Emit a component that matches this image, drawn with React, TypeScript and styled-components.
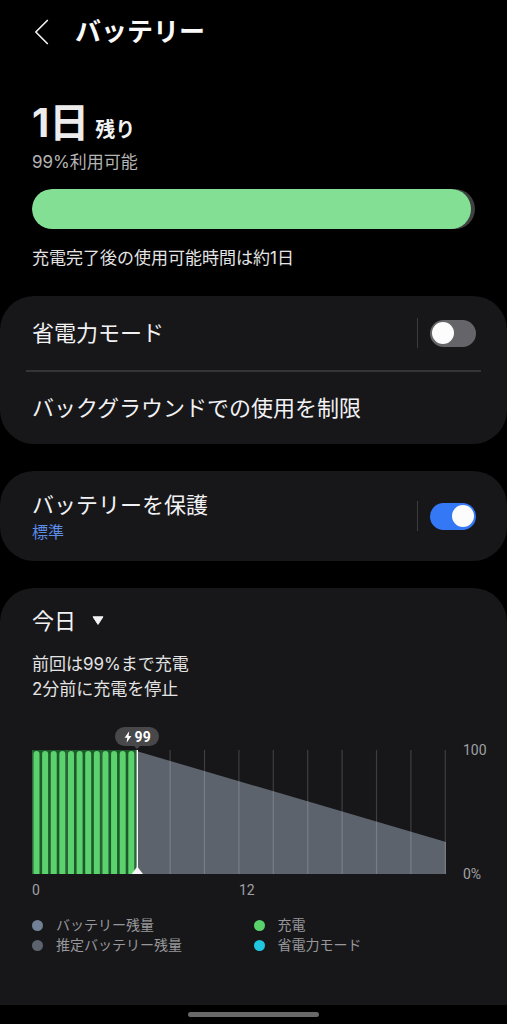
import React, { useState } from "react";
import styled, { createGlobalStyle } from "styled-components";

const GlobalStyle = createGlobalStyle`
  *, *::before, *::after { box-sizing: border-box; }
  html, body { margin: 0; background: #000; }
  body, button, select, input {
    font-family: Inter, "Noto Sans CJK JP", sans-serif;
    color: #f2f2f4;
  }
`;

const Page = styled.div`
  display: flex;
  flex-direction: column;
  min-height: 100vh;
  background: #000;
`;

const Header = styled.header`
  display: flex;
  align-items: center;
  gap: 26px;
  height: 63px;
  padding: 0 32px;
`;

const BackButton = styled.button`
  display: flex;
  padding: 0;
  border: 0;
  background: none;
  cursor: pointer;
`;

const PageTitle = styled.h1`
  margin: 0;
  font-size: 26px;
  line-height: 36px;
  font-weight: 700;
  color: #fafafa;
`;

const Summary = styled.section`
  padding: 35px 32px 26px;
`;

const Remaining = styled.p`
  display: flex;
  align-items: baseline;
  gap: 6px;
  margin: 0 0 2px;
  font-weight: 700;
`;

const RemainingValue = styled.span`
  font-size: 40px;
  line-height: 50px;
  color: #ececec;
`;

const RemainingUnit = styled.span`
  font-size: 20px;
  line-height: 24px;
`;

const Note = styled.p<{ $muted?: boolean }>`
  margin: 0;
  font-size: 17px;
  line-height: 24px;
  color: ${(p) => (p.$muted ? "#b4b4b4" : "#e4e4e4")};
`;

const Meter = styled.div`
  height: 40px;
  margin: 15px 0 17px;
  border-radius: 20px;
  background: #3f4141;
  overflow: hidden;
`;

const MeterFill = styled.div`
  height: 100%;
  border-radius: 20px;
  background: #82df93;
`;

const Card = styled.section<{ $last?: boolean }>`
  border-radius: ${(p) => (p.$last ? "34px 34px 0 0" : "34px")};
  background: #17171a;
  flex: ${(p) => (p.$last ? "1 0 auto" : "0 0 auto")};
  padding: ${(p) => (p.$last ? "17px 32px 48px" : "0")};
  & + & { margin-top: 27px; }
`;

const Row = styled.div<{ $height: number }>`
  display: flex;
  align-items: center;
  justify-content: space-between;
  min-height: ${(p) => p.$height}px;
  padding: 0 31px 0 32px;
`;

const RowText = styled.div`
  display: flex;
  flex-direction: column;
  padding-top: 2px;
`;

const RowLabel = styled.label`
  font-size: 22px;
  line-height: 30px;
`;

const RowButton = styled.button`
  width: 100%;
  padding: 0;
  border: 0;
  background: none;
  font-size: 22px;
  line-height: 30px;
  text-align: left;
  cursor: pointer;
`;

const RowStatus = styled.span`
  font-size: 16px;
  line-height: 24px;
  color: #5c8ce6;
`;

const Divider = styled.hr`
  height: 2px;
  margin: 0 26px;
  border: 0;
  background: #353538;
`;

const SwitchArea = styled.div`
  display: flex;
  align-items: center;
  height: 30px;
  padding-left: 12px;
  border-left: 1px solid #3c3c40;
`;

const Switch = styled.input`
  appearance: none;
  display: flex;
  align-items: center;
  width: 46px;
  height: 27px;
  margin: 0;
  padding: 0 2px;
  border-radius: 14px;
  background: #656569;
  cursor: pointer;

  &::before {
    content: "";
    width: 22px;
    height: 22px;
    border-radius: 50%;
    background: #fcfcfc;
  }
  &:checked {
    justify-content: flex-end;
    background: #3578f6;
  }
`;

const DayPicker = styled.div`
  display: flex;
  align-items: center;
  gap: 16px;
  height: 32px;
  margin-bottom: 15px;
`;

const DaySelect = styled.select`
  appearance: none;
  field-sizing: content;
  margin: 0;
  padding: 0;
  border: 0;
  background: none;
  font-size: 22px;
  line-height: 32px;
  cursor: pointer;
`;

const HistoryText = styled.p`
  margin: 0;
  font-size: 17px;
  line-height: 25px;
  color: #e4e4e4;
`;

const Chart = styled.figure`
  display: flex;
  gap: 17px;
  margin: 48px -16px 0 0;
  font-family: Roboto, sans-serif;
  font-size: 14px;
  line-height: 20px;
  color: #a0a0a3;
`;

const PlotColumn = styled.div`
  flex: 1;
  position: relative;
`;

const Plot = styled.svg`
  display: block;
  width: 100%;
  height: auto;
`;

const Tag = styled.div`
  position: absolute;
  left: 25.4%;
  bottom: 100%;
  display: flex;
  align-items: center;
  justify-content: center;
  gap: 3px;
  width: 44px;
  height: 19px;
  margin-bottom: 4px;
  border-radius: 10px;
  background: #48484b;
  font-weight: 700;
  color: #fff;
  transform: translateX(-50%);

  &::after {
    content: "";
    position: absolute;
    top: 100%;
    left: 50%;
    border: 3px solid transparent;
    border-top-color: #48484b;
    transform: translateX(-50%);
  }
`;

const XAxis = styled.div`
  display: grid;
  grid-template-columns: 1fr 1fr;
  margin-top: 6px;
`;

const YAxis = styled.div`
  display: flex;
  flex-direction: column;
  justify-content: space-between;
  width: 28px;
  margin: -10px 0 16px;
`;

const Legend = styled.ul`
  display: grid;
  grid-template-columns: 1fr 1fr;
  margin: 15px 0 0;
  padding: 0;
  list-style: none;
`;

const LegendItem = styled.li<{ $color: string }>`
  display: flex;
  align-items: center;
  gap: 13px;
  font-size: 14px;
  line-height: 20px;
  color: #98989b;

  &::before {
    content: "";
    width: 11px;
    height: 11px;
    border-radius: 50%;
    background: ${(p) => p.$color};
  }
`;

const NavBar = styled.footer`
  display: flex;
  justify-content: center;
  align-items: center;
  height: 19px;
`;

const NavHandle = styled.div`
  width: 26%;
  height: 5px;
  border-radius: 3px;
  background: #69696a;
`;

const LEVEL = 99;
const CHARGE_BARS = Array.from({ length: 12 }, (_, i) => 1.5 + i * 8.62);
const GRID_LINES = Array.from({ length: 13 }, (_, i) => 0.5 + i * 34.4);

const LEGEND = [
  { label: "バッテリー残量", color: "#718096" },
  { label: "充電", color: "#59d26c" },
  { label: "推定バッテリー残量", color: "#5d636d" },
  { label: "省電力モード", color: "#1fc8e0" },
];

function ToggleControl({ id, initial }: { id: string; initial: boolean }) {
  const [on, setOn] = useState(initial);
  return (
    <SwitchArea>
      <Switch id={id} type="checkbox" role="switch" checked={on} onChange={() => setOn(!on)} />
    </SwitchArea>
  );
}

function BatteryPlot() {
  return (
    <Plot viewBox="0 0 414 124" aria-hidden="true">
      <rect x="0" y="0" width="105" height="124" fill="#1d5a2a" />
      {CHARGE_BARS.map((x) => (
        <path key={x} d={`M${x} 124V4a3 3 0 0 1 6 0V124z`} fill="#5bd26e" />
      ))}
      <path d="M106 1.5L414 92V124H106z" fill="#5d636d" />
      {GRID_LINES.map((x, i) => (
        <rect
          key={x}
          x={x - 0.6}
          y="0"
          width="1.2"
          height="124"
          fill="#fff"
          opacity={i < 4 ? 0.08 : 0.17}
        />
      ))}
      <rect x="104.6" y="0" width="1.4" height="124" fill="#fff" />
      <path d="M105.3 116.5L111 124H99.6z" fill="#f4f4f6" />
    </Plot>
  );
}

export default function App() {
  return (
    <>
      <GlobalStyle />
      <Page>
        <Header>
          <BackButton aria-label="戻る">
            <svg width="17" height="26" viewBox="0 0 17 26" fill="none">
              <path
                d="M15.3 1.5L3.8 13L15.3 24.5"
                stroke="#f2f2f2"
                strokeWidth="1.7"
                strokeLinecap="round"
                strokeLinejoin="round"
              />
            </svg>
          </BackButton>
          <PageTitle>バッテリー</PageTitle>
        </Header>

        <Summary>
          <Remaining>
            <RemainingValue>1日</RemainingValue>
            <RemainingUnit>残り</RemainingUnit>
          </Remaining>
          <Note $muted>{LEVEL}%利用可能</Note>
          <Meter
            role="progressbar"
            aria-label="バッテリー残量"
            aria-valuenow={LEVEL}
            aria-valuemin={0}
            aria-valuemax={100}
          >
            <MeterFill style={{ width: `${LEVEL}%` }} />
          </Meter>
          <Note>充電完了後の使用可能時間は約1日</Note>
        </Summary>

        <Card>
          <Row $height={74}>
            <RowLabel htmlFor="power-saving">省電力モード</RowLabel>
            <ToggleControl id="power-saving" initial={false} />
          </Row>
          <Divider />
          <Row $height={72}>
            <RowButton>バックグラウンドでの使用を制限</RowButton>
          </Row>
        </Card>

        <Card>
          <Row $height={90}>
            <RowText>
              <RowLabel htmlFor="battery-protection">バッテリーを保護</RowLabel>
              <RowStatus>標準</RowStatus>
            </RowText>
            <ToggleControl id="battery-protection" initial />
          </Row>
        </Card>

        <Card $last>
          <DayPicker>
            <DaySelect aria-label="表示する日" defaultValue="today">
              <option value="today">今日</option>
            </DaySelect>
            <svg width="12" height="10" viewBox="0 0 12 10" aria-hidden="true">
              <path
                d="M1 .8H11L6 8.4z"
                fill="#f2f2f4"
                stroke="#f2f2f4"
                strokeWidth="1"
                strokeLinejoin="round"
              />
            </svg>
          </DayPicker>
          <HistoryText>
            前回は99%まで充電
            <br />
            2分前に充電を停止
          </HistoryText>

          <Chart>
            <PlotColumn>
              <Tag>
                <svg width="8" height="12" viewBox="0 0 8 12" aria-hidden="true">
                  <path d="M5.2 .3L.6 6.8H3.3L2.6 11.7L7.4 5H4.6z" fill="#fff" />
                </svg>
                {LEVEL}
              </Tag>
              <BatteryPlot />
              <XAxis>
                <span>0</span>
                <span>12</span>
              </XAxis>
            </PlotColumn>
            <YAxis>
              <span>100</span>
              <span>0%</span>
            </YAxis>
          </Chart>

          <Legend>
            {LEGEND.map((item) => (
              <LegendItem key={item.label} $color={item.color}>
                {item.label}
              </LegendItem>
            ))}
          </Legend>
        </Card>

        <NavBar>
          <NavHandle />
        </NavBar>
      </Page>
    </>
  );
}
